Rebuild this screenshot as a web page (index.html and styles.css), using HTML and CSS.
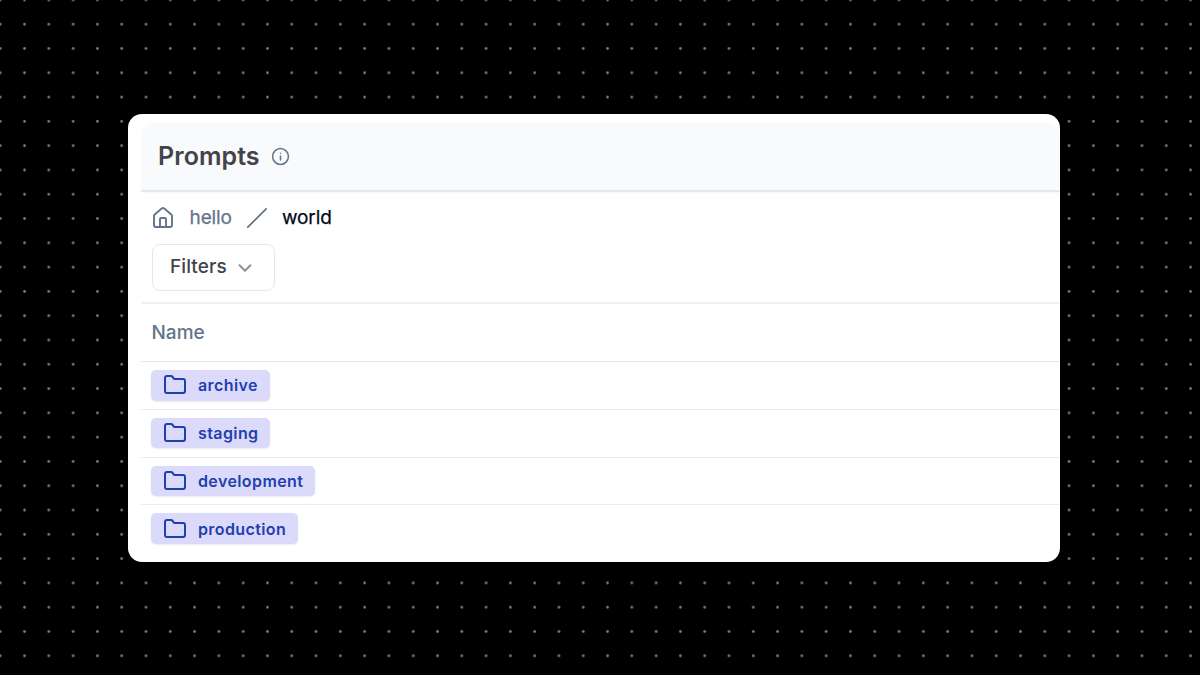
FILE: index.html
```html
<!DOCTYPE html>
<html lang="en">
<head>
<meta charset="utf-8">
<title>Prompts</title>
<link rel="stylesheet" href="styles.css">
</head>
<body>
<svg class="dots" width="1200" height="675" aria-hidden="true">
  <defs>
    <pattern id="grid" width="24.292" height="24.292" patternUnits="userSpaceOnUse" x="-11.9" y="-12.2">
      <circle cx="12.146" cy="12.146" r="1.35" fill="#7c7c7c"/>
    </pattern>
    <symbol id="folder" viewBox="0 0 24 24"><path d="M20 20a2 2 0 0 0 2-2V8a2 2 0 0 0-2-2h-7.9a2 2 0 0 1-1.69-.9L9.6 3.9A2 2 0 0 0 7.93 3H4a2 2 0 0 0-2 2v13a2 2 0 0 0 2 2Z"/></symbol>
  </defs>
  <rect width="1200" height="675" fill="url(#grid)"/>
</svg>
<main class="card">
  <header class="header">
    <h1 class="title">Prompts</h1>
    <svg class="icon info" viewBox="0 0 24 24"><circle cx="12" cy="12" r="10"/><path d="M12 16.5v-5M12 7.8h.01"/></svg>
  </header>
  <section class="toolbar">
    <nav class="breadcrumb">
      <svg class="icon home" viewBox="0 0 24 24"><path d="M15 21v-8a1 1 0 0 0-1-1h-4a1 1 0 0 0-1 1v8"/><path d="M3 10a2 2 0 0 1 .709-1.528l7-6a2 2 0 0 1 2.582 0l7 6A2 2 0 0 1 21 10v9a2 2 0 0 1-2 2H5a2 2 0 0 1-2-2z"/></svg>
      <span class="crumb parent">hello</span>
      <svg class="icon slash" viewBox="0 0 24 24"><path d="M22 2 2 22"/></svg>
      <span class="crumb current">world</span>
    </nav>
    <button class="filters"><span class="filters-label">Filters</span><svg class="icon chevron" viewBox="0 0 24 24"><path d="m6 9 6 6 6-6"/></svg></button>
  </section>
  <section class="table">
    <div class="head"><span class="head-label">Name</span></div>
    <div class="row"><span class="badge"><svg class="icon folder"><use href="#folder"/></svg><span class="name">archive</span></span></div>
    <div class="row"><span class="badge"><svg class="icon folder"><use href="#folder"/></svg><span class="name">staging</span></span></div>
    <div class="row"><span class="badge"><svg class="icon folder"><use href="#folder"/></svg><span class="name">development</span></span></div>
    <div class="row"><span class="badge"><svg class="icon folder"><use href="#folder"/></svg><span class="name">production</span></span></div>
  </section>
</main>
</body>
</html>
```
FILE: styles.css
```css
* { box-sizing: border-box; }
body {
  margin: 0;
  width: 1200px;
  height: 675px;
  overflow: hidden;
  background: #000;
  padding: 114px 140px 0 128px;
  font-family: Inter, "Liberation Sans", sans-serif;
}
.dots { position: absolute; inset: 0; }
.card {
  position: relative;
  height: 448px;
  padding: 9px 0 0 13px;
  background: #fff;
  border-radius: 14px;
  overflow: hidden;
}
.icon {
  display: block;
  flex: none;
  fill: none;
  stroke: currentColor;
  stroke-width: 2;
  stroke-linecap: round;
  stroke-linejoin: round;
}
.header {
  display: flex;
  align-items: center;
  height: 69px;
  padding: 0 0 2px 17px;
  background: #f8fafc;
  border-bottom: 2px solid #e3e9f1;
  border-radius: 14px 14px 0 0;
  box-shadow: 0 1px 2px rgba(0, 0, 0, .04);
}
.title {
  margin: 0;
  font-size: 25px;
  line-height: 32px;
  font-weight: 600;
  letter-spacing: .07px;
  color: #434349;
}
.info { width: 19px; height: 19px; margin: 1px 0 0 11.5px; color: #64748b; stroke-width: 1.9; }
.toolbar { height: 112px; padding: 12px 0 0 10.5px; border-bottom: 2px solid #edf1f6; }
.breadcrumb { display: flex; align-items: center; height: 28px; }
.home { width: 24px; height: 24px; margin: -1px 0 0 -.5px; color: #64748b; stroke-width: 1.9; }
.crumb { font-size: 19px; line-height: 28px; letter-spacing: -.1px; -webkit-text-stroke: .25px currentColor; }
.parent { margin-left: 14.5px; color: #64748b; }
.slash { width: 22px; height: 22px; margin: 0 14px 0 14px; color: #64748b; stroke-width: 1.9; }
.current { color: #020817; }
.filters {
  display: flex;
  align-items: center;
  width: 123.5px;
  height: 47px;
  margin-top: 12px;
  padding: 0 0 2px 17.5px;
  background: #fff;
  border: 1px solid #e2e8f0;
  border-radius: 8px;
  color: #434349;
  font: 500 19px/28px Inter, sans-serif;
  letter-spacing: .1px;
}
.chevron { width: 22px; height: 22px; margin: 2px 0 0 7px; color: #8b8b90; }
.head {
  display: flex;
  align-items: center;
  height: 58px;
  padding-left: 10.5px;
  border-bottom: 1px solid #e2e8f0;
  color: #64748b;
  font-size: 19px;
  font-weight: 500;
}
.row {
  display: flex;
  align-items: center;
  height: 47.75px;
  padding-left: 10.4px;
  border-bottom: 1.5px solid #e6ebf2;
}
.row:last-child { border: 0; height: 46.75px; }
.badge {
  display: flex;
  align-items: center;
  height: 30.5px;
  padding: 0 12px 0 11.6px;
  border-radius: 5px;
  background: #dcdafa;
  box-shadow: 0 1px 2px rgba(0, 0, 0, .08);
  color: #1e40af;
}
.folder { width: 24px; height: 24px; margin: 0 11px 0 0; }
.name { font-size: 16px; line-height: 24px; font-weight: 600; letter-spacing: .4px; }
```
